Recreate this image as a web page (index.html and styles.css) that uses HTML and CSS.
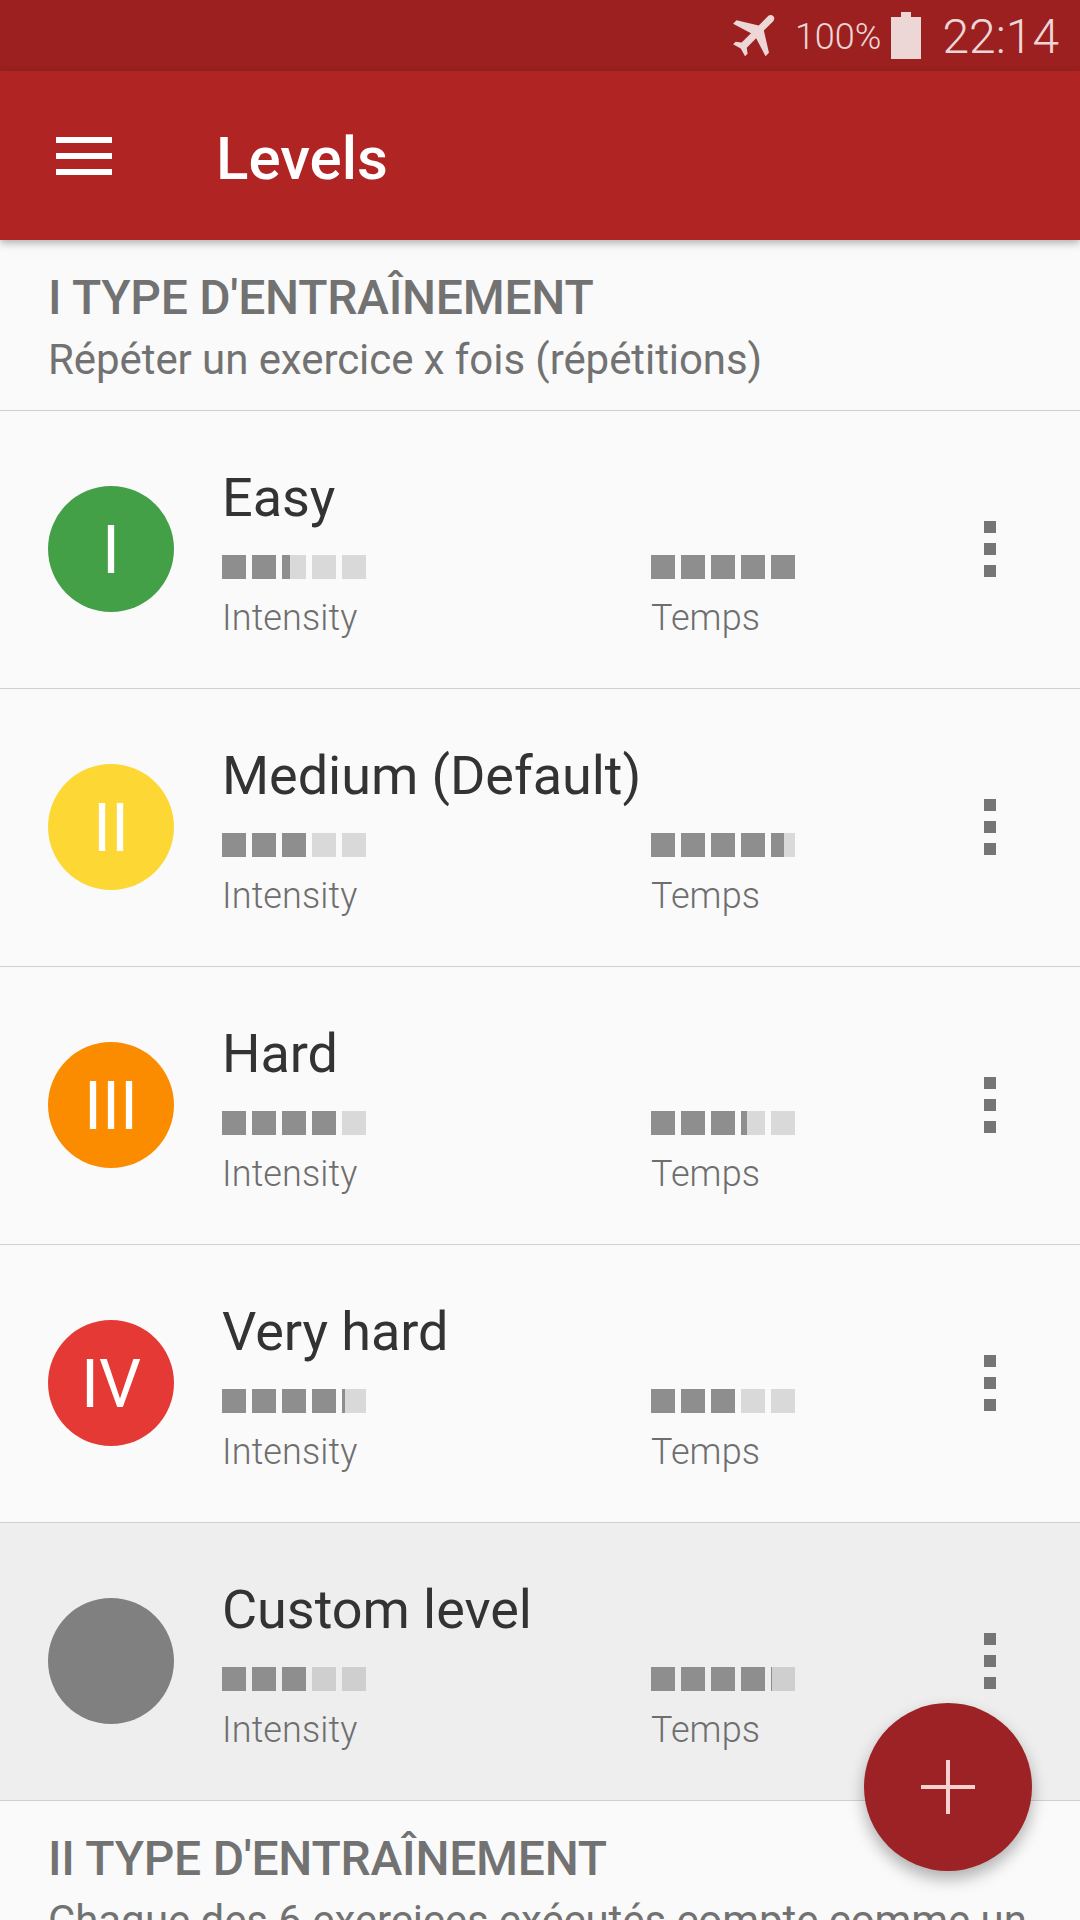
FILE: index.html
```html
<!DOCTYPE html>
<html lang="en">
<head>
  <meta charset="UTF-8">
  <title>Levels</title>
  <link rel="stylesheet" href="styles.css">
</head>
<body>

  <div class="statusbar">
    <svg class="plane" viewBox="0 0 24 24"><path transform="rotate(45 12 12)" d="M21 16v-2l-8-5V3.5c0-.83-.67-1.5-1.5-1.5S10 2.67 10 3.5V9l-8 5v2l8-2.5V19l-2 1.5V22l3.5-1 3.5 1v-1.5L13 19v-5.5l8 2.5z"/></svg>
    <span class="battery-pct">100%</span>
    <div class="battery"><div class="battery-cap"></div><div class="battery-body"></div></div>
    <span class="clock">22:14</span>
  </div>

  <div class="toolbar">
    <div class="menu"><span></span><span></span><span></span></div>
    <div class="toolbar-title">Levels</div>
  </div>

  <div class="section">
    <div class="section-title">I TYPE D'ENTRAÎNEMENT</div>
    <div class="section-sub">Répéter un exercice x fois (répétitions)</div>
  </div>

  <div id="levels"></div>

  <div class="section">
    <div class="section-title">II TYPE D'ENTRAÎNEMENT</div>
    <div class="section-sub">Chaque des 6 exercices exécutés compte comme un</div>
  </div>

  <div class="fab"><svg viewBox="0 0 54 54"><rect x="25" width="4" height="54"/><rect y="25" width="54" height="4"/></svg></div>

  <script>
    const levels = [
      { name: "Easy", mark: "I", color: "#43a047", intensity: 2.33, time: 5 },
      { name: "Medium (Default)", mark: "II", color: "#fdd835", intensity: 3, time: 4.54 },
      { name: "Hard", mark: "III", color: "#fb8c00", intensity: 4, time: 3.25 },
      { name: "Very hard", mark: "IV", color: "#e53935", intensity: 4.13, time: 3 },
      { name: "Custom level", mark: "", color: "#808080", intensity: 3, time: 4.05, custom: true }
    ];

    function bar(value, label) {
      let squares = "";
      for (let i = 0; i < 5; i++) {
        const fill = Math.max(0, Math.min(1, value - i)) * 100;
        squares += `<div class="square"><div class="square-fill" style="width:${fill}%"></div></div>`;
      }
      return `<div class="stat"><div class="squares">${squares}</div><div class="stat-label">${label}</div></div>`;
    }

    let rows = "";
    for (let level of levels) {
      rows += `
        <div class="level${level.custom ? " custom" : ""}">
          <div class="badge" style="background:${level.color}">${level.mark}</div>
          <div class="level-info">
            <div class="level-name">${level.name}</div>
            <div class="stats">${bar(level.intensity, "Intensity")}${bar(level.time, "Temps")}</div>
          </div>
          <div class="more"><span></span><span></span><span></span></div>
        </div>`;
    }
    document.getElementById("levels").innerHTML = rows;
  </script>

</body>
</html>
```

FILE: styles.css
```css
html, body {
  height: 1920px;
  overflow: hidden;
}
body {
  margin: 0;
  position: relative;
  font-family: Roboto, sans-serif;
  background-color: #fafafa;
}
.statusbar {
  height: 71px;
  background-color: #9c2020;
  display: flex;
  align-items: center;
  justify-content: flex-end;
  padding-right: 21px;
  color: #ecd6d6;
}
.plane {
  width: 58px;
  height: 58px;
  fill: #ecd6d6;
  margin-right: 9px;
  margin-bottom: 3px;
}
.battery-pct {
  font-size: 36px;
  font-weight: 300;
  margin-top: 3px;
  margin-right: 10px;
}
.battery {
  width: 30px;
  margin-right: 21px;
  display: flex;
  flex-direction: column;
  align-items: center;
}
.battery-cap {
  width: 10px;
  height: 5px;
  background-color: #ecd6d6;
}
.battery-body {
  width: 30px;
  height: 42px;
  background-color: #ecd6d6;
}
.clock {
  font-size: 48px;
  font-weight: 300;
  margin-top: 2px;
}
.toolbar {
  height: 169px;
  background-color: #b12424;
  display: flex;
  align-items: center;
  box-shadow: 0 3px 8px rgba(0,0,0,0.3);
  position: relative;
}
.menu {
  width: 56px;
  margin-left: 56px;
  margin-right: 104px;
  display: flex;
  flex-direction: column;
  gap: 10px;
}
.menu span {
  height: 6px;
  background-color: white;
}
.toolbar-title {
  font-size: 60px;
  font-weight: 500;
  color: white;
  margin-top: 5px;
}
.section {
  padding: 30px 48px 0;
  height: 140px;
  border-bottom: 1px solid #d0d0d0;
}
.section-title {
  font-size: 48px;
  font-weight: 500;
  line-height: 56px;
  letter-spacing: -0.25px;
  color: #727272;
}
.section-sub {
  font-size: 42px;
  line-height: 60px;
  letter-spacing: -0.07px;
  margin-top: 4px;
  color: #727272;
  white-space: nowrap;
}
.level {
  height: 276px;
  padding-bottom: 1px;
  border-bottom: 1px solid #d0d0d0;
  display: flex;
  align-items: center;
  padding-left: 48px;
}
.custom {
  background-color: #eeeeee;
}
.badge {
  width: 126px;
  height: 126px;
  border-radius: 50%;
  flex-shrink: 0;
  display: flex;
  align-items: center;
  justify-content: center;
  color: white;
  font-size: 66px;
  padding-top: 3px;
  box-sizing: border-box;
}
.level-info {
  margin-left: 48px;
  margin-top: 55px;
  width: 762px;
  align-self: flex-start;
}
.level-name {
  font-size: 54px;
  line-height: 64px;
  letter-spacing: -0.05px;
  color: #333;
}
.stats {
  display: flex;
  margin-top: 25px;
}
.stat {
  width: 429px;
  flex-shrink: 0;
}
.squares {
  display: flex;
  gap: 6px;
}
.square {
  width: 24px;
  height: 24px;
  background-color: rgba(0,0,0,0.13);
}
.square-fill {
  height: 100%;
  background-color: #8e8e8e;
}
.stat-label {
  font-size: 36px;
  font-weight: 300;
  line-height: 48px;
  letter-spacing: 0.12px;
  margin-top: 15px;
  color: #6e6e6e;
}
.more {
  display: flex;
  flex-direction: column;
  gap: 10px;
}
.more span {
  width: 12px;
  height: 12px;
  background-color: #757575;
}
.fab {
  position: absolute;
  left: 864px;
  top: 1703px;
  width: 168px;
  height: 168px;
  border-radius: 50%;
  background-color: #9c2226;
  box-shadow: 0 8px 16px rgba(0,0,0,0.3);
  display: flex;
  align-items: center;
  justify-content: center;
}
.fab svg {
  width: 54px;
  height: 54px;
  fill: #f7d0d0;
}
```
